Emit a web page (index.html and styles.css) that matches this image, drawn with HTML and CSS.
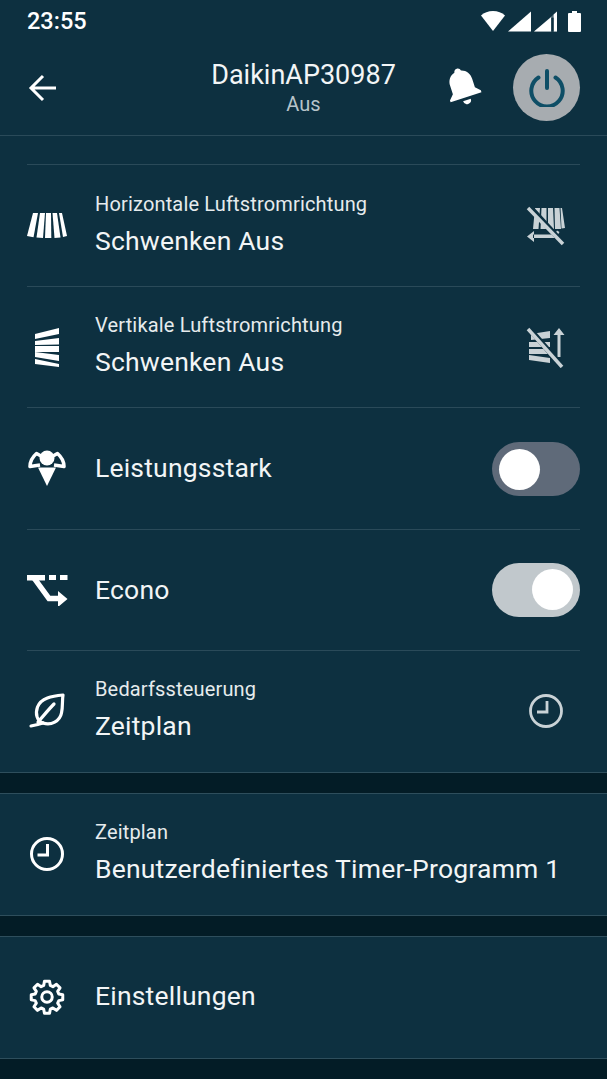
FILE: index.html
```html
<!DOCTYPE html>
<html lang="de">
<head>
<meta charset="utf-8">
<title>DaikinAP30987</title>
<link rel="stylesheet" href="styles.css">
</head>
<body>
<div class="status">
  <span class="time">23:55</span>
  <div class="status-icons">
    <svg width="24" height="20" viewBox="0 0 24 20"><path d="M0 4.500C3 1.700 7.300 0 12 0s9 1.700 12 4.500L12 20z" fill="#fff"/></svg>
    <svg width="23" height="21" viewBox="0 0 24 21"><path d="M24 0v21H0z" fill="#fff"/></svg>
    <svg width="23" height="21" viewBox="0 0 24 21"><path d="M24 0v21H0z" fill="#fff" opacity=".3"/><path d="M18 5.700V21H0zM20.500 21H24V0l-3.500 3.200z" fill="#fff"/><path d="M18 6.500h2.500V21H18z" fill="#0d3040"/></svg>
    <svg class="si-batt" width="13" height="21" viewBox="0 0 13 21"><path d="M4 0h5v2h3a1 1 0 0 1 1 1v17a1 1 0 0 1-1 1H1a1 1 0 0 1-1-1V3a1 1 0 0 1 1-1h3z" fill="#fff"/></svg>
  </div>
</div>
<header class="topbar">
  <svg class="back" width="30" height="28" viewBox="0 0 30 28"><path d="M15 2 3 14l12 12M3 14h25" fill="none" stroke="#fff" stroke-width="3"/></svg>
  <div class="title">
    <div class="title-main">DaikinAP30987</div>
    <div class="title-sub">Aus</div>
  </div>
  <svg class="bell" width="44" height="44" viewBox="0 0 38 38"><g transform="rotate(-18 19 19)"><path d="M19 1.500c1.600 0 2.800 1.100 3 2.600 4.400 1.200 7 5 7 9.700v7.700l4 4.200v1.800H5v-1.800l4-4.200v-7.700c0-4.700 2.600-8.500 7-9.700.2-1.500 1.400-2.600 3-2.600z" fill="#fff"/><path d="M15.500 30h7a3.500 3.500 0 0 1-7 0z" fill="#fff"/></g></svg>
  <div class="power">
    <svg width="36" height="38" viewBox="0 0 36 38"><path d="M9.500 8.500A15.700 15.700 0 1 0 26.500 8.500" fill="none" stroke="#0e4e66" stroke-width="4" stroke-linecap="round"/><path d="M18 2v17" stroke="#0e4e66" stroke-width="4" stroke-linecap="round"/></svg>
  </div>
</header>
<main class="panel">
  <div class="spacer"></div>
  <section class="row">
    <svg class="ico" width="42" height="26" viewBox="0 0 42 26"><g fill="#fff"><path d="M7 1h5L7.500 25.200 1 24z"/><path d="M14 1h5l-2 24.900-6.500-.3z"/><path d="M20 1h5l.3 25H19z"/><path d="M26.500 1h4.500l3.500 24.600-6 .4z"/><path d="M33 1h3l5 23-4 1z"/></g></svg>
    <div class="text"><div class="label">Horizontale Luftstromrichtung</div><div class="value">Schwenken Aus</div></div>
    <svg class="ico-r" width="40" height="44" viewBox="0 0 40 44"><g fill="#c9d2d6"><path d="M9 5h5l-1.500 21H7zM15.500 5h5v21h-6zM22 5h5l1 21h-6zM28.500 5h5l1.500 21h-6zM34.500 5h1.500l3 20-3.500.5z"/><path d="M7 31.500v3.500h23l3.500-6-2.500-1.500-2.500 4zM1 33.500l7-5.500v11z"/></g><path d="M4 4l32 35" stroke="#0d3040" stroke-width="5.500"/><path d="M2 5l35 36" stroke="#c9d2d6" stroke-width="3.500"/></svg>
  </section>
  <section class="row">
    <svg class="ico" width="26" height="40" viewBox="0 0 26 40"><g fill="#fff"><path d="M1 7l24-6v6L1 12z"/><path d="M1 14l24-3v6.500L1 18z"/><path d="M1 19h24v6H1z"/><path d="M1 25l24 3v6L1 30z"/><path d="M1 32l24 5v3L1 37z"/></g></svg>
    <div class="text"><div class="label">Vertikale Luftstromrichtung</div><div class="value">Schwenken Aus</div></div>
    <svg class="ico-r" width="40" height="42" viewBox="0 0 40 42"><g fill="#c9d2d6"><path d="M5 8l19-3v7l-19 2zM3 16h21v5H3zM3 23h21v5H3zM3 29l21 3v5l-21-3z"/><path d="M31.500 9v22h3V9h4L33 2l-5.500 7z"/></g><path d="M2 1l33 38" stroke="#0d3040" stroke-width="5.500"/><path d="M2 3l34 38" stroke="#c9d2d6" stroke-width="3.500"/></svg>
  </section>
  <section class="row">
    <svg class="ico" width="40" height="36" viewBox="0 0 40 36"><circle cx="20" cy="8" r="7.500" fill="#fff"/><g fill="none" stroke="#fff" stroke-width="3.500" stroke-linejoin="round"><path d="M13 15 3 16.500C3 11 5.500 7 9.500 3.500L14 6"/><path d="M27 15 37 16.500C37 11 34.500 7 30.500 3.500L26 6"/></g><path d="M11 17.500h18L20 36z" fill="#fff"/></svg>
    <div class="text"><div class="value solo">Leistungsstark</div></div>
    <div class="switch off"><span class="knob"></span></div>
  </section>
  <section class="row">
    <svg class="ico" width="42" height="32" viewBox="0 0 42 32"><g fill="#fff"><path d="M1 1h18v5.500H1zM23 1h7v5h-7zM34 1h7.500v5H34zM32 17l9.500 8-9.500 8z"/></g><path d="M8 4l15 20.500h11" fill="none" stroke="#fff" stroke-width="5.500"/></svg>
    <div class="text"><div class="value solo">Econo</div></div>
    <div class="switch on"><span class="knob"></span></div>
  </section>
  <section class="row tail">
    <svg class="ico" width="36" height="36" viewBox="0 0 36 36"><g fill="none" stroke="#fff" stroke-width="3.200" stroke-linecap="round" stroke-linejoin="round"><path d="M34 2c-11 1-22 3-25.500 12C6 21 8 28 14 30c8 3 17-2 18.500-10C34 13 33 8 34 2z"/><path d="M2 33c5-1 9-2 12-3M9 29c7-8 11-13 16-18"/></g></svg>
    <div class="text"><div class="label">Bedarfssteuerung</div><div class="value">Zeitplan</div></div>
    <svg class="ico-r clock" width="36" height="36" viewBox="0 0 36 36"><circle cx="18" cy="18" r="15.500" fill="none" stroke="#c9d2d6" stroke-width="2.800"/><path d="M19 8v11H9" fill="none" stroke="#c9d2d6" stroke-width="2.800"/></svg>
  </section>
  <div class="band"></div>
  <section class="row plain">
    <svg class="ico" width="36" height="36" viewBox="0 0 36 36"><circle cx="18" cy="18" r="15.500" fill="none" stroke="#fff" stroke-width="3"/><path d="M18.500 8v11H8.500" fill="none" stroke="#fff" stroke-width="3"/></svg>
    <div class="text"><div class="label">Zeitplan</div><div class="value">Benutzerdefiniertes Timer-Programm 1</div></div>
  </section>
  <div class="band"></div>
  <section class="row plain">
    <svg class="ico" width="36" height="36" viewBox="0 0 24 24"><path d="M12 8.500a3.500 3.500 0 1 0 0 7 3.500 3.500 0 0 0 0-7z" fill="none" stroke="#fff" stroke-width="2"/><path d="M10.300 1.500h3.400l.5 2.800 1.700.8 2.400-1.600 2.400 2.400-1.600 2.400.8 1.700 2.600.5v3.400l-2.600.5-.8 1.700 1.600 2.400-2.400 2.400-2.400-1.600-1.700.8-.5 2.800h-3.400l-.5-2.800-1.700-.8-2.400 1.600-2.400-2.400 1.600-2.400-.8-1.700-2.600-.5v-3.400l2.600-.5.8-1.700-1.600-2.400 2.400-2.400 2.400 1.600 1.700-.8z" fill="none" stroke="#fff" stroke-width="2" stroke-linejoin="round"/></svg>
    <div class="text"><div class="value solo">Einstellungen</div></div>
  </section>
  <div class="band last"></div>
</main>
</body>
</html>
```

FILE: styles.css
```css
* { box-sizing: border-box; }
html, body { margin: 0; padding: 0; }
body {
  width: 607px;
  height: 1079px;
  overflow: hidden;
  background: #0d3040;
  color: #fff;
  font-family: Roboto, "Noto Sans", sans-serif;
}
.status {
  height: 42px;
  display: flex;
  align-items: center;
  justify-content: space-between;
  padding: 0 26px 0 27px;
}
.time { font-size: 23.500px; font-weight: 500; }
.status-icons { display: flex; align-items: center; gap: 3px; }
.si-batt { margin-left: 8px; }
.topbar {
  height: 94px;
  display: flex;
  align-items: center;
  padding: 0 27px 2px 28px;
  position: relative;
  border-bottom: 1px solid #2a4a59;
}
.title {
  position: absolute;
  left: 0;
  right: 0;
  top: 17px;
  text-align: center;
}
.title-main { font-size: 27px; color: #f2f5f6; line-height: 33px; }
.title-sub { font-size: 20px; color: #b7c4ca; line-height: 25px; }
.back { position: relative; }
.bell { position: relative; margin-left: auto; margin-right: 28px; }
.power {
  position: relative;
  width: 67px;
  height: 67px;
  border-radius: 50%;
  background: #a7acb0;
  display: flex;
  align-items: center;
  justify-content: center;
}
.spacer { height: 28px; }
.row {
  height: 121.500px;
  margin: 0 27px;
  border-top: 1px solid #2a4a59;
  display: flex;
  align-items: center;
  position: relative;
}
.row.tail { margin: 0; padding: 0 27px; height: 122.500px; border-top: 0; border-bottom: 1px solid #2e4e5c; }
.row.tail::before { content: ""; position: absolute; top: 0; left: 27px; right: 27px; height: 1px; background: #2a4a59; }
.row.plain { margin: 0; height: 123px; border-top: 1px solid #2e4e5c; border-bottom: 1px solid #2e4e5c; }
.text { position: absolute; left: 68px; }
.row .ico { position: absolute; left: 20px; transform: translateX(-50%); }
.row.tail .ico { left: 47px; }
.row.tail .text { left: 95px; }
.row.tail .ico-r { right: 43px; }
.row.plain .ico { left: 47px; }
.row.plain .text { left: 95px; margin-top: -2px; }
.label { font-size: 20px; line-height: 24px; color: #e6ebed; margin-top: -1px; letter-spacing: 0.16px; }
.value { font-size: 26.500px; line-height: 34px; margin-top: 8px; color: #f2f5f6; letter-spacing: 0.2px; white-space: nowrap; }
.value.solo { margin-top: 0; }
.ico-r { position: absolute; right: 14px; top: 50%; transform: translateY(-50%); }
.switch {
  position: absolute;
  right: 0;
  top: 50%;
  transform: translateY(-50%);
  width: 88px;
  height: 54px;
  border-radius: 27px;
  background: #5f6a79;
  display: flex;
  align-items: center;
  padding: 0 7px;
}
.switch.off { margin-top: 1px; }
.knob { width: 41px; height: 41px; border-radius: 50%; background: #fff; }
.switch.on { background: #c1c8cc; justify-content: flex-end; }
.band { height: 20px; background: #031c26; }
.band.last { height: 21px; }
```
